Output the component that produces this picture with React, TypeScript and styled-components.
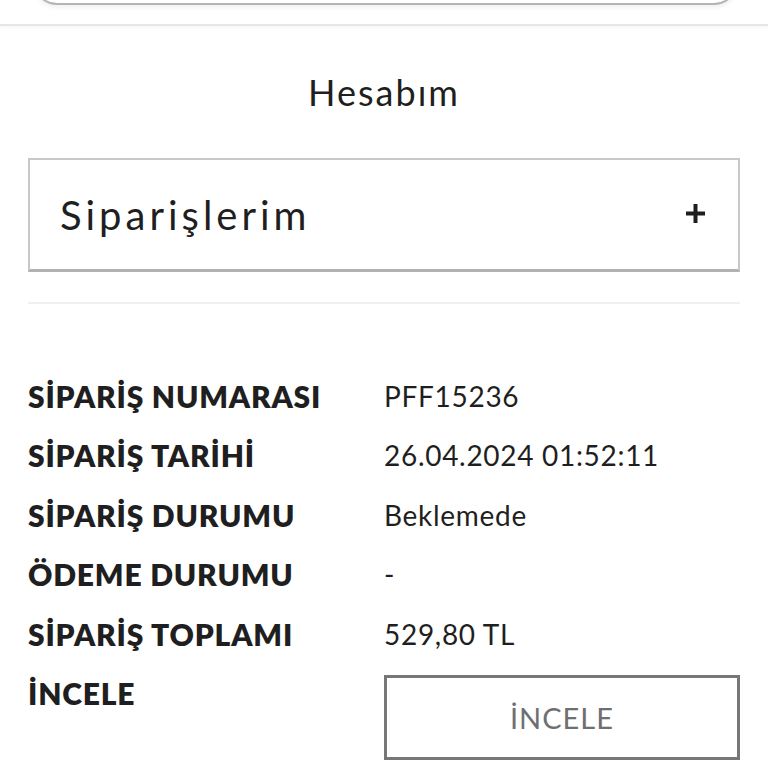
import React from 'react';
import styled, { createGlobalStyle } from 'styled-components';

const GlobalStyle = createGlobalStyle`
  body {
    margin: 0;
    background: #fff;
    font-family: Lato, "Noto Sans", sans-serif;
    color: #1f1f21;
  }
`;

const Page = styled.div`
  width: 768px;
  min-height: 768px;
  background: #fff;
`;

const TopBar = styled.div`
  height: 26px;
  display: flex;
  align-items: flex-end;
  padding: 0 30px 19px 33px;
  box-sizing: border-box;
  overflow: hidden;
  border-bottom: 2px solid #e6e6e6;
  box-shadow: 0 2px 3px rgba(0, 0, 0, 0.03);
`;

const SearchBox = styled.div`
  flex: 1;
  height: 50px;
  flex-shrink: 0;
  border: 2px solid #b5b5b5;
  border-radius: 24px;
  box-shadow: 0 3px 4px rgba(0, 0, 0, 0.05);
`;

const Title = styled.h1`
  margin: 44px 0 0;
  text-align: center;
  font-size: 36px;
  line-height: 44px;
  font-weight: 400;
  letter-spacing: 2px;
`;

const Content = styled.div`
  padding: 0 28px;
`;

const AccordionHead = styled.div`
  margin-top: 44px;
  height: 114px;
  box-sizing: border-box;
  border: 2px solid #c8c8c8;
  border-bottom: 3px solid #b2b2b2;
  display: flex;
  align-items: center;
  justify-content: space-between;
  padding: 0 33px 0 30px;
`;

const AccordionTitle = styled.span`
  font-size: 40px;
  font-weight: 400;
  letter-spacing: 4px;
`;

const PlusIcon = styled.svg`
  width: 19px;
  height: 19px;
  margin-top: -2px;
`;

const Divider = styled.hr`
  margin: 30px 0 0;
  border: none;
  border-top: 2px solid #f0f0f0;
`;

const InfoGrid = styled.div`
  margin-top: 63px;
  display: grid;
  grid-template-columns: 356px 1fr;
  grid-auto-rows: minmax(59.4px, auto);
  align-items: start;
`;

const Label = styled.div`
  font-size: 30px;
  line-height: 59px;
  font-weight: 800;
  letter-spacing: 0.8px;
  white-space: nowrap;
`;

const Value = styled.div`
  font-size: 28px;
  line-height: 59px;
  font-weight: 400;
  letter-spacing: 0.7px;
  white-space: nowrap;
`;

const ReviewButton = styled.button`
  margin-top: 11px;
  width: 356px;
  height: 85px;
  background: #fff;
  border: 3px solid #77777a;
  color: #6f6f72;
  font-family: Lato, "Noto Sans", sans-serif;
  font-size: 29px;
  letter-spacing: 1px;
  cursor: pointer;
`;

const rows: [string, string][] = [
  ['SİPARİŞ NUMARASI', 'PFF15236'],
  ['SİPARİŞ TARİHİ', '26.04.2024 01:52:11'],
  ['SİPARİŞ DURUMU', 'Beklemede'],
  ['ÖDEME DURUMU', '-'],
  ['SİPARİŞ TOPLAMI', '529,80 TL'],
];

export default function App() {
  return (
    <Page>
      <GlobalStyle />
      <TopBar>
        <SearchBox />
      </TopBar>
      <Title>Hesabım</Title>
      <Content>
        <AccordionHead>
          <AccordionTitle>Siparişlerim</AccordionTitle>
          <PlusIcon viewBox="0 0 19 19">
            <path d="M9.5 0v19M0 9.5h19" stroke="#1f1f21" strokeWidth="4" />
          </PlusIcon>
        </AccordionHead>
        <Divider />
        <InfoGrid>
          {rows.map(([label, value]) => (
            <React.Fragment key={label}>
              <Label>{label}</Label>
              <Value>{value}</Value>
            </React.Fragment>
          ))}
          <Label>İNCELE</Label>
          <div>
            <ReviewButton>İNCELE</ReviewButton>
          </div>
        </InfoGrid>
      </Content>
    </Page>
  );
}
